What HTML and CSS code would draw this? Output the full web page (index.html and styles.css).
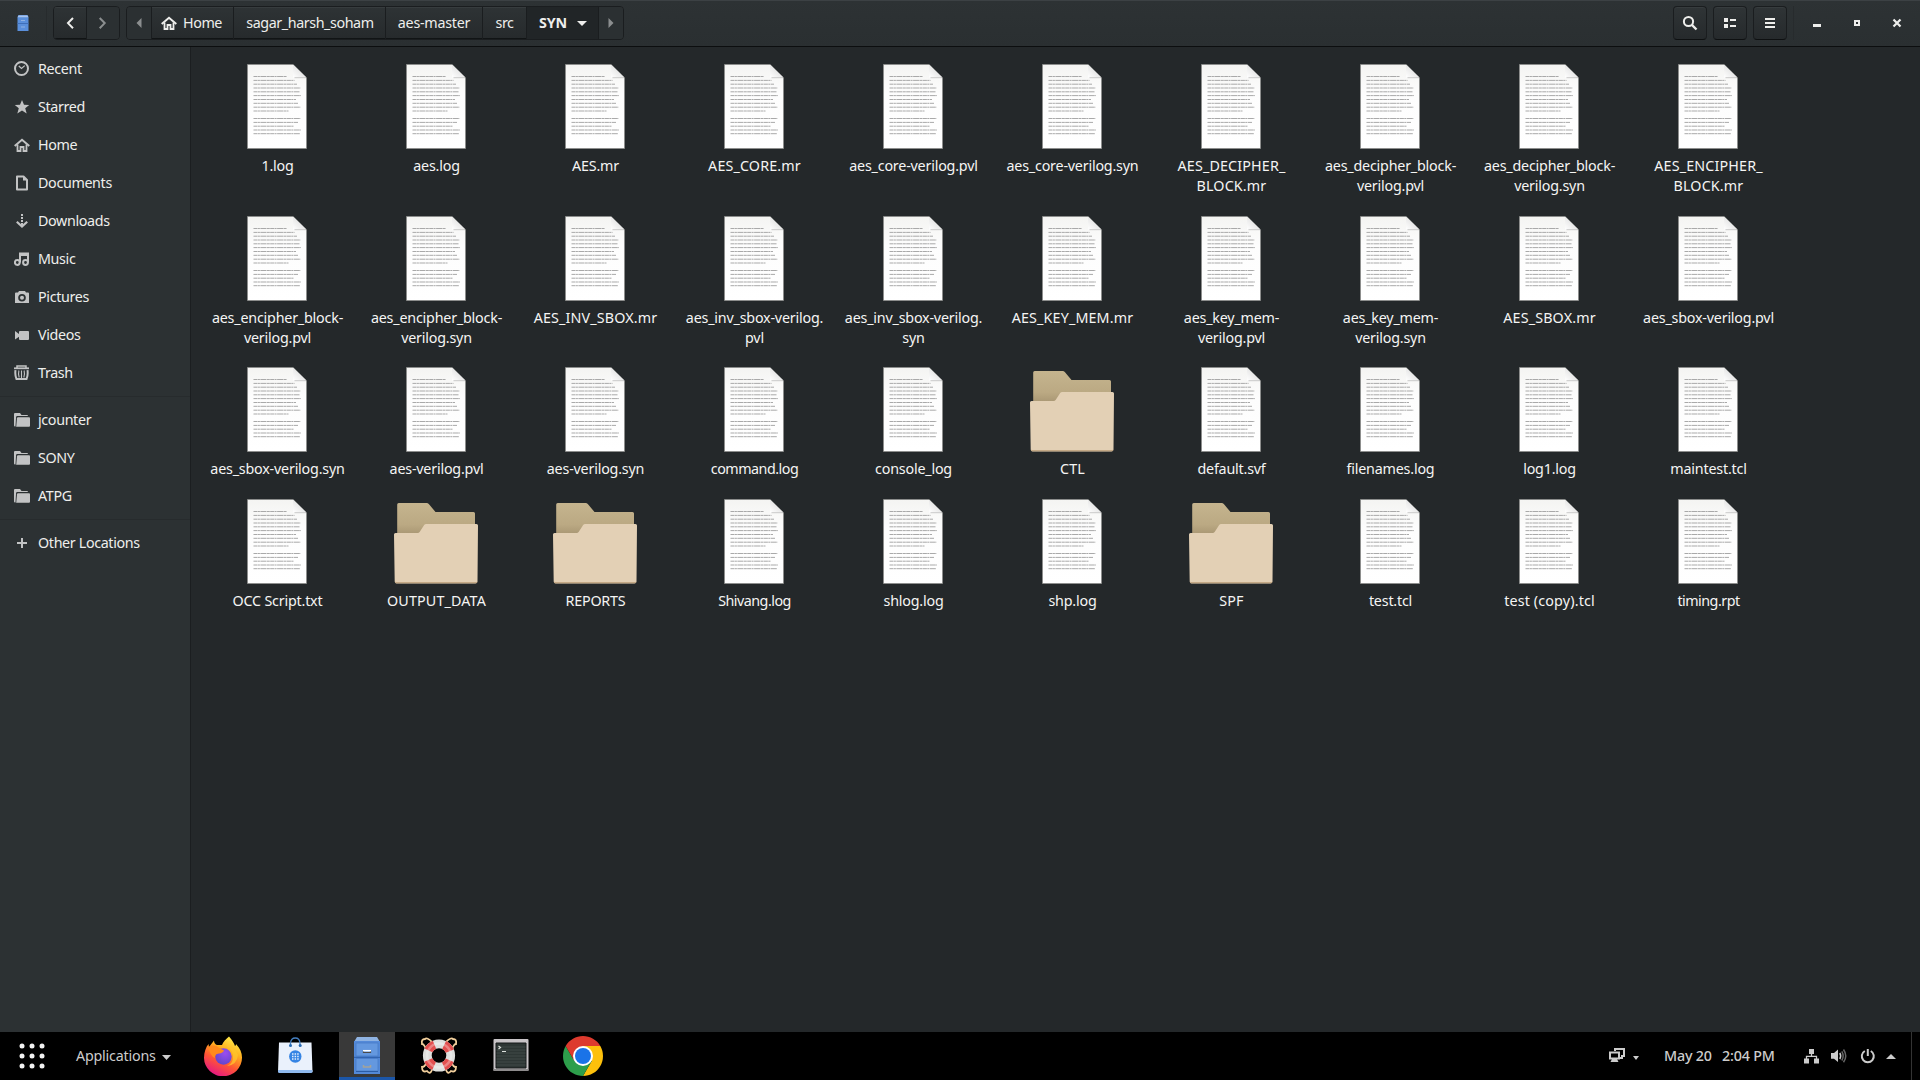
FILE: index.html
```html
<!DOCTYPE html>
<html lang="en">
<head>
<meta charset="utf-8">
<title>SYN</title>
<link rel="stylesheet" href="styles.css">
</head>
<body>
<svg class="defs" aria-hidden="true">
  <defs>
    <linearGradient id="paper" x1="0" y1="0" x2="0" y2="1"><stop offset="0" stop-color="#f4f4f2"/><stop offset=".35" stop-color="#fdfdfd"/><stop offset="1" stop-color="#fff"/></linearGradient>
    <linearGradient id="back" x1="0" y1="0" x2="0" y2="1"><stop offset="0" stop-color="#c5b48e"/><stop offset=".6" stop-color="#bba983"/><stop offset="1" stop-color="#a08e6c"/></linearGradient>
    <linearGradient id="fold" x1="0" y1="1" x2="1" y2="0"><stop offset="0" stop-color="#fff"/><stop offset=".5" stop-color="#e8e8e8"/></linearGradient>
    <symbol id="doc" viewBox="0 0 96 85">
      <path d="M18.5 .5H64L77.500 14V84.500H18.500Z" fill="url(#paper)" stroke="#8b8d8c" stroke-width=".8"/>
      <path d="M64 .5V13.500H77.500Z" fill="url(#fold)"/>
      <path d="M65.500 13.700H77" stroke="#c4c4c4" stroke-width=".9"/>
      <g stroke="#a9a9a9" stroke-width="1" stroke-dasharray="4 .4 2 .5 6 .4 3 .4">
        <path d="M24.500 12.500H58M24.500 16.400H65.500M24.500 20.200H68M24.500 24H71.500M24.500 27.800H70.500M24.500 31.600H72M24.500 35.500H67M24.500 39.300H69M24.500 43.200H71.500M24.500 47H59.500M24.500 54.500H71.500M24.500 58.400H69M24.500 62.200H65M24.500 66H72M24.500 69.700H71"/>
      </g>
    </symbol>
    <symbol id="dir" viewBox="0 0 96 85">
      <path d="M9.200 5.500Q9.200 4 10.700 4H38.500Q40 4 41 5.200L47.500 13H85.500Q87 13 87 14.500V40H9.200Z" fill="url(#back)"/>
      <path d="M6 35.500Q6 34 7.500 34H29.500Q31 34 31.800 32.800L36 26.200Q36.800 25 38.200 25H88.500Q90 25 90 26.500L89.500 82.500Q89.500 84.400 87.500 84.400H8.500Q6.700 84.400 6.700 82.500Z" fill="#e3d0b5"/>
      <path d="M6.800 82Q7 84.300 8.500 84.300H87.500Q89.300 84.300 89.400 82Q89 83.200 87.500 83.200H8.500Q7 83.200 6.800 82Z" fill="#b99b75"/>
    </symbol>
    <symbol id="home" viewBox="0 0 16 16"><g fill="none" stroke="currentColor"><path d="M.7 9 8 2.800 15.300 9" stroke-width="2"/><path d="M3.500 7.500V14H6.500V10H9.500V14H12.500V7.500" stroke-width="1.800"/></g></symbol>
    <symbol id="folder" viewBox="0 0 16 16"><path d="M0 2Q0 1 1 1H6L7.500 3H13Q14 3 14 4H3.200Q2.200 4 2.100 5L1.500 14.500H1Q0 14.500 0 13.500Z" fill="currentColor"/><path d="M4 5.200H15Q16 5.200 16 6.200V13.800Q16 14.800 15 14.800H2.200L3 6.200Q3.100 5.200 4 5.200Z" fill="currentColor"/></symbol>
  </defs>
</svg>

<header class="header">
  <svg class="app-icon" width="12" height="16" viewBox="0 0 12 16"><path d="M1.500 0H10.500L11.500 2V16H.5V2Z" fill="#5a8fdb"/><path d="M1.500 .5H10.500L11.300 2.200H.7Z" fill="#a9c4ec"/><path d="M.5 8.500H11.500" stroke="#3f6fb8"/><path d="M4 5.500H8M4 12H8" stroke="#8fb2e2"/></svg>
  <i class="vsep"></i>
  <nav class="group history">
    <span class="btn"><svg width="16" height="16" viewBox="0 0 16 16"><path d="M11 3 6 8.100 11 13.200" fill="none" stroke="#eeeeec" stroke-width="2"/></svg></span>
    <span class="btn off"><svg width="16" height="16" viewBox="0 0 16 16"><path d="M4.700 3 9.700 8.100 4.700 13.200" fill="none" stroke="#8b8e8f" stroke-width="2"/></svg></span>
  </nav>
  <nav class="group path">
    <span class="btn off edge"><svg width="16" height="16" viewBox="0 0 16 16"><path d="M10.500 3V13L5.500 8Z" fill="#8b8e8f"/></svg></span>
    <span class="btn p-home"><svg width="16" height="16"><use href="#home"/></svg>Home</span>
    <span class="btn p-user">sagar_harsh_soham</span>
    <span class="btn p-aes">aes-master</span>
    <span class="btn p-src">src</span>
    <span class="btn p-syn">SYN<svg width="10" height="5" viewBox="0 0 10 5"><path d="M0 0H10L5 5Z" fill="#eeeeec"/></svg></span>
    <span class="btn off edge"><svg width="16" height="16" viewBox="0 0 16 16"><path d="M5.500 3V13L10.500 8Z" fill="#8b8e8f"/></svg></span>
  </nav>
  <div class="tools">
    <span class="tool"><svg width="16" height="16" viewBox="0 0 16 16"><circle cx="6.500" cy="6.500" r="4.600" fill="none" stroke="#eeeeec" stroke-width="2"/><path d="M9.900 9.900 14.500 14.500" stroke="#eeeeec" stroke-width="2.300"/></svg></span>
    <span class="tool"><svg width="16" height="16" viewBox="0 0 16 16"><path d="M2 3H6V7H2ZM2 9H6V13H2ZM8 4H14V6H8ZM8 10H14V12H8Z" fill="#eeeeec"/></svg></span>
    <span class="tool"><svg width="16" height="16" viewBox="0 0 16 16"><path d="M3 3H13V5H3ZM3 7H13V9H3ZM3 11H13V13H3Z" fill="#eeeeec"/></svg></span>
  </div>
  <i class="vsep right"></i>
  <div class="controls">
    <svg width="16" height="16" viewBox="0 0 16 16"><path d="M4 9H12V12H4Z" fill="#eeeeec"/></svg>
    <svg width="16" height="16" viewBox="0 0 16 16"><path d="M6 6H10V10H6Z" fill="none" stroke="#eeeeec" stroke-width="2"/></svg>
    <svg width="16" height="16" viewBox="0 0 16 16"><path d="M4.500 4.500 11.500 11.500M11.500 4.500 4.500 11.500" stroke="#eeeeec" stroke-width="2.200"/></svg>
  </div>
</header>

<main class="window">
  <aside class="sidebar">
    <div class="place"><svg width="16" height="16" viewBox="0 0 16 16"><circle cx="7.500" cy="7.500" r="6.500" fill="none" stroke="currentColor" stroke-width="2"/><path d="M4.800 5 7.500 7.500 10.800 4.600" fill="none" stroke="currentColor" stroke-width="1.200"/></svg>Recent</div>
    <div class="place"><svg width="16" height="16" viewBox="0 0 16 16"><path d="M8 1 10 5.800 15.200 6 11.200 9.300 12.700 14.500 8 11.600 3.300 14.500 4.800 9.300 .8 6 6 5.800Z" fill="currentColor"/></svg>Starred</div>
    <div class="place"><svg width="16" height="16"><use href="#home"/></svg>Home</div>
    <div class="place"><svg width="16" height="16" viewBox="0 0 16 16"><path d="M3 1.500H9.500L13 5V14.500H3Z" fill="none" stroke="currentColor" stroke-width="2" stroke-linejoin="round"/><path d="M9 1V5.500H13.500Z" fill="currentColor"/></svg>Documents</div>
    <div class="place"><svg width="16" height="16" viewBox="0 0 16 16"><path d="M7 1H9V3H7ZM7 4H9V6H7ZM7 7H9V9H7ZM7 10H9V13H7Z" fill="currentColor"/><path d="M2.800 8.800 8 13.600 13.200 8.800" fill="none" stroke="currentColor" stroke-width="2.200"/></svg>Downloads</div>
    <div class="place"><svg width="16" height="16" viewBox="0 0 16 16"><g fill="none" stroke="currentColor" stroke-width="2"><circle cx="3.300" cy="11.500" r="2.400"/><circle cx="11.500" cy="11.500" r="2.400"/><path d="M6 11.500V2.500H14V11.500"/></g><path d="M6 2H14V5H6Z" fill="currentColor"/></svg>Music</div>
    <div class="place"><svg width="16" height="16" viewBox="0 0 16 16"><path fill-rule="evenodd" d="M1 4.500Q1 3.500 2 3.500H4L5 2H11L12 3.500H14Q15 3.500 15 4.500V14H1ZM8 5A3.800 3.800 0 1 0 8 12.600 3.800 3.800 0 1 0 8 5ZM8 6.800A2 2 0 1 1 8 10.800 2 2 0 1 1 8 6.800Z" fill="currentColor"/></svg>Pictures</div>
    <div class="place"><svg width="16" height="16" viewBox="0 0 16 16"><path d="M1 4 5 7V5Q5 4 6 4H14Q15 4 15 5V12Q15 13 14 13H6Q5 13 5 12V9.800L1 12.500Z" fill="currentColor"/></svg>Videos</div>
    <div class="place"><svg width="16" height="16" viewBox="0 0 16 16"><g fill="none" stroke="currentColor"><path d="M0 3.300H15" stroke-width="1.800"/><path d="M3 3V.9H12V3" stroke-width="1.500"/><path d="M1.500 5.200Q.8 10 2.500 14H12.500Q14.200 10 13.500 5.200" stroke-width="2"/><path d="M4.900 5.500Q4 9 5.200 12.500M7.500 5.500V13M10.100 5.500Q11 9 9.800 12.500" stroke-width="1.100"/></g></svg>Trash</div>
    <hr>
    <div class="place"><svg width="16" height="16"><use href="#folder"/></svg>jcounter</div>
    <div class="place"><svg width="16" height="16"><use href="#folder"/></svg>SONY</div>
    <div class="place"><svg width="16" height="16"><use href="#folder"/></svg>ATPG</div>
    <hr>
    <div class="place"><svg width="16" height="16" viewBox="0 0 16 16"><path d="M8 3V13M3 8H13" stroke="currentColor" stroke-width="2"/></svg>Other Locations</div>
  </aside>

  <section class="files">
    <figure><svg><use href="#doc"/></svg><figcaption>1.log</figcaption></figure>
    <figure><svg><use href="#doc"/></svg><figcaption>aes.log</figcaption></figure>
    <figure><svg><use href="#doc"/></svg><figcaption>AES.mr</figcaption></figure>
    <figure><svg><use href="#doc"/></svg><figcaption class="caps">AES_CORE.mr</figcaption></figure>
    <figure><svg><use href="#doc"/></svg><figcaption>aes_core-verilog.pvl</figcaption></figure>
    <figure><svg><use href="#doc"/></svg><figcaption>aes_core-verilog.syn</figcaption></figure>
    <figure><svg><use href="#doc"/></svg><figcaption class="caps">AES_DECIPHER_<br>BLOCK.mr</figcaption></figure>
    <figure><svg><use href="#doc"/></svg><figcaption>aes_decipher_block-<br>verilog.pvl</figcaption></figure>
    <figure><svg><use href="#doc"/></svg><figcaption>aes_decipher_block-<br>verilog.syn</figcaption></figure>
    <figure><svg><use href="#doc"/></svg><figcaption class="caps">AES_ENCIPHER_<br>BLOCK.mr</figcaption></figure>

    <figure><svg><use href="#doc"/></svg><figcaption>aes_encipher_block-<br>verilog.pvl</figcaption></figure>
    <figure><svg><use href="#doc"/></svg><figcaption>aes_encipher_block-<br>verilog.syn</figcaption></figure>
    <figure><svg><use href="#doc"/></svg><figcaption class="caps">AES_INV_SBOX.mr</figcaption></figure>
    <figure><svg><use href="#doc"/></svg><figcaption>aes_inv_sbox-verilog.<br>pvl</figcaption></figure>
    <figure><svg><use href="#doc"/></svg><figcaption>aes_inv_sbox-verilog.<br>syn</figcaption></figure>
    <figure><svg><use href="#doc"/></svg><figcaption class="caps">AES_KEY_MEM.mr</figcaption></figure>
    <figure><svg><use href="#doc"/></svg><figcaption>aes_key_mem-<br>verilog.pvl</figcaption></figure>
    <figure><svg><use href="#doc"/></svg><figcaption>aes_key_mem-<br>verilog.syn</figcaption></figure>
    <figure><svg><use href="#doc"/></svg><figcaption class="caps">AES_SBOX.mr</figcaption></figure>
    <figure><svg><use href="#doc"/></svg><figcaption>aes_sbox-verilog.pvl</figcaption></figure>

    <figure><svg><use href="#doc"/></svg><figcaption>aes_sbox-verilog.syn</figcaption></figure>
    <figure><svg><use href="#doc"/></svg><figcaption>aes-verilog.pvl</figcaption></figure>
    <figure><svg><use href="#doc"/></svg><figcaption>aes-verilog.syn</figcaption></figure>
    <figure><svg><use href="#doc"/></svg><figcaption class="tight">command.log</figcaption></figure>
    <figure><svg><use href="#doc"/></svg><figcaption>console_log</figcaption></figure>
    <figure><svg><use href="#dir"/></svg><figcaption class="caps">CTL</figcaption></figure>
    <figure><svg><use href="#doc"/></svg><figcaption>default.svf</figcaption></figure>
    <figure><svg><use href="#doc"/></svg><figcaption>filenames.log</figcaption></figure>
    <figure><svg><use href="#doc"/></svg><figcaption>log1.log</figcaption></figure>
    <figure><svg><use href="#doc"/></svg><figcaption>maintest.tcl</figcaption></figure>

    <figure><svg><use href="#doc"/></svg><figcaption>OCC Script.txt</figcaption></figure>
    <figure><svg><use href="#dir"/></svg><figcaption class="caps">OUTPUT_DATA</figcaption></figure>
    <figure><svg><use href="#dir"/></svg><figcaption>REPORTS</figcaption></figure>
    <figure><svg><use href="#doc"/></svg><figcaption class="tight">Shivang.log</figcaption></figure>
    <figure><svg><use href="#doc"/></svg><figcaption>shlog.log</figcaption></figure>
    <figure><svg><use href="#doc"/></svg><figcaption>shp.log</figcaption></figure>
    <figure><svg><use href="#dir"/></svg><figcaption class="caps">SPF</figcaption></figure>
    <figure><svg><use href="#doc"/></svg><figcaption>test.tcl</figcaption></figure>
    <figure><svg><use href="#doc"/></svg><figcaption class="caps">test (copy).tcl</figcaption></figure>
    <figure><svg><use href="#doc"/></svg><figcaption class="tight">timing.rpt</figcaption></figure>
  </section>
</main>

<footer class="taskbar">
  <svg class="apps" width="26" height="26" viewBox="0 0 26 26"><g fill="#f2f2f2"><circle cx="3" cy="3" r="2.500"/><circle cx="13" cy="3" r="2.500"/><circle cx="23" cy="3" r="2.500"/><circle cx="3" cy="13" r="2.500"/><circle cx="13" cy="13" r="2.500"/><circle cx="23" cy="13" r="2.500"/><circle cx="3" cy="23" r="2.500"/><circle cx="13" cy="23" r="2.500"/><circle cx="23" cy="23" r="2.500"/></g></svg>
  <span class="menu">Applications</span>
  <svg class="menu-arrow" width="9" height="5" viewBox="0 0 9 5"><path d="M0 0H9L4.500 5Z" fill="#ccc"/></svg>
  <div class="dock">
    <span class="task"><svg width="40" height="40" viewBox="0 0 40 40">
      <defs><linearGradient id="fx" x1=".8" y1="0" x2=".3" y2="1"><stop offset="0" stop-color="#fff44f"/><stop offset=".35" stop-color="#ffb01f"/><stop offset=".65" stop-color="#ff5634"/><stop offset="1" stop-color="#e31587"/></linearGradient><radialGradient id="fp" cx=".6" cy=".3" r=".8"><stop offset="0" stop-color="#9b4df0"/><stop offset="1" stop-color="#5a45c8"/></radialGradient></defs>
      <path d="M26 .5C29 4 31 7 32 10 33 9.500 33 8.500 33 8 37 12 39 17 39 21.500A19 18.500 0 0 1 1 22C1 16 3 11 5.500 8L6 11 11 4.500C11 7 12.500 8.500 14 9L19 9C20 6 23 3 26 .5Z" fill="url(#fx)"/>
      <circle cx="20.500" cy="20.500" r="8.200" fill="url(#fp)"/>
      <path d="M5.500 11Q12 8 15.500 11.500L21 14.500Q20 17 16 17.500 11 18 12 22 7 20 5.500 11Z" fill="#ff8a1c"/>
      <path d="M20 9Q28 10 30 19 31 27 24 30 34 29 35 19 31 9 20 9Z" fill="#ffc52c" opacity=".75"/></svg></span>
    <span class="task"><svg width="40" height="40" viewBox="0 0 40 40"><path d="M4 6.500H36.500L37.500 36H3Z" fill="#eaf1fc"/><path d="M3 34H37.500V36Q37.500 37 36 37H4.500Q3 37 3 36Z" fill="#8fb9ee"/><path d="M15.500 10V7Q16 2 20.300 2T25 7V10" fill="none" stroke="#4580c2" stroke-width="1.300"/><circle cx="15.500" cy="9.500" r="1.500" fill="#2669b4"/><circle cx="25.200" cy="9.500" r="1.500" fill="#2669b4"/><circle cx="20.300" cy="20.500" r="6.200" fill="#3584e4"/><path d="M17 18H24M17 20.500H24M17 23H24" stroke="#e3eefc" stroke-width="1.300" stroke-dasharray="1.500 1.100"/></svg></span>
    <span class="task active"><svg width="40" height="40" viewBox="0 0 40 40"><path d="M10 1H30L33 6H7Z" fill="#8fb3e2"/><path d="M7 5H33V38H7Z" fill="#5389d8"/><path d="M9 7H31V20H9ZM9 22.500H31V35H9Z" fill="#6498df" stroke="#477bc8" stroke-width=".8"/><path d="M7 21.300H33M9 35.500H31" stroke="#2a5ca6"/><path d="M16.500 14.500V16.500H23.500V14.500" fill="none" stroke="#4a4a4a" stroke-width="1.200"/><path d="M16 14.700H24" stroke="#fff" stroke-width="1.500"/><path d="M16.500 29V31H23.500V29" fill="none" stroke="#a5a399" stroke-width="1.500"/></svg></span>
    <span class="task"><svg width="40" height="40" viewBox="0 0 40 40"><path d="M13 6Q8 1 6 3 2 3 3 8 5 8 7 13M27 6Q32 1 34 3 38 3 37 8 35 8 33 13M13 34Q11 39 8 35 3 37 3 31 6 31 7 27M27 34Q29 39 32 35 37 37 37 31 34 31 33 27" fill="none" stroke="#f2cf9c" stroke-width="1.800"/><circle cx="20" cy="19.500" r="11.700" fill="none" stroke="#dfe0de" stroke-width="8.800"/><circle cx="20" cy="19.500" r="11.700" fill="none" stroke="#e34f4f" stroke-width="8.800" stroke-dasharray="8.500 9.880" stroke-dashoffset="-4.940"/><circle cx="20" cy="19.500" r="12" fill="none" stroke="#fff" stroke-width="2.500" opacity=".3"/></svg></span>
    <span class="task"><svg width="40" height="40" viewBox="0 0 40 40"><path d="M2.500 4Q2.500 3 3.500 3H36.500Q37.500 3 37.500 4V34.500H2.500Z" fill="#c8c4c7"/><path d="M2.500 33H37.500V35H2.500Z" fill="#8d8b8c"/><path d="M5 7H35V32H5Z" fill="#2e3735" stroke="#171b1a" stroke-width="1"/><path d="M5.500 11H34.500M5.500 14H34.500M5.500 17H34.500M5.500 20H34.500M5.500 23H34.500M5.500 26H34.500M5.500 29H34.500" stroke="#414a48"/><path d="M7.500 10 9.500 11.500 7.500 13M11 15.500H15" fill="none" stroke="#dfe3df" stroke-width="1.200"/></svg></span>
    <span class="task"><svg width="40" height="40" viewBox="0 0 40 40"><path d="M20 10H37.320A20 20 0 0 1 20 40L28.660 25Z" fill="#fdc00c"/><path d="M28.660 25 20 40A20 20 0 0 1 2.680 10L11.340 25Z" fill="#2d9e4b"/><path d="M20 10H37.320A20 20 0 0 0 2.680 10L11.340 25Z" fill="#dd3a2e"/><circle cx="20" cy="20" r="10" fill="#fff"/><circle cx="20" cy="20" r="8" fill="#1a73e8"/></svg></span>
  </div>
  <div class="status">
    <svg class="s-disp" width="16" height="16" viewBox="0 0 16 16"><path d="M6 3V1H15V8H12" fill="none" stroke="#ccc" stroke-width="2"/><path d="M1 4.500H10V10.500H1Z" fill="none" stroke="#ccc" stroke-width="2"/><path d="M3 11H8L9.500 14H1.500ZM11 9H14V11H11Z" fill="#ccc"/></svg>
    <svg class="s-down" width="6" height="4" viewBox="0 0 6 4"><path d="M0 0H6L3 4Z" fill="#ccc"/></svg>
    <span class="date">May 20</span>
    <span class="time">2:04 PM</span>
    <svg class="s-net" width="16" height="16" viewBox="0 0 16 16"><path d="M5 1H10V6H5ZM0 10.500H5V15.500H0ZM10 10.500H15V15.500H10Z" fill="#ccc"/><path d="M7.500 5V8.300M2.500 11V8.300H12.500V11" fill="none" stroke="#ccc" stroke-width="1.300"/></svg>
    <svg class="s-vol" width="16" height="16" viewBox="0 0 16 16"><path d="M0 5H3L7 1.500V14L3 10.700H0Z" fill="#ccc"/><path d="M8.800 5Q10.600 8 8.800 11" fill="none" stroke="#ccc" stroke-width="1.500"/><path d="M10.800 3.300Q13.500 8 10.800 12.500M12.500 1.500Q17 8 12.500 14.300" fill="none" stroke="#666" stroke-width="1.500"/></svg>
    <svg class="s-pow" width="16" height="16" viewBox="0 0 16 16"><path d="M4.800 3A6 6 0 1 0 10.800 3M7.800 1V8" fill="none" stroke="#ccc" stroke-width="2"/></svg>
    <svg class="s-up" width="10" height="5" viewBox="0 0 10 5"><path d="M0 5H10L5 0Z" fill="#ccc"/></svg>
    <i class="edge-line"></i>
  </div>
</footer>
</body>
</html>
```
FILE: styles.css
```css
* { box-sizing: border-box; }
body {
  margin: 0;
  width: 1920px;
  height: 1080px;
  display: flex;
  flex-direction: column;
  overflow: hidden;
  background: #24282a;
  color: #eeeeec;
  font: 14.3px/20px "Noto Sans", "Open Sans", sans-serif;
  letter-spacing: -0.2px;
}
svg { display: block; flex: none; }
.defs { position: absolute; width: 0; height: 0; }

.header {
  display: flex;
  align-items: flex-start;
  height: 47px;
  padding-top: 5px;
  background: linear-gradient(#2d3234, #2a2f31);
  border-top: 1px solid #3c4144;
  border-bottom: 1px solid #0c0e0f;
}
.app-icon { margin: 9px 0 0 17px; }
.vsep { width: 1px; height: 34px; margin-left: 17px; background: #272b2d; }
.group {
  display: flex;
  height: 34px;
  border: 1px solid #1a1d1f;
  border-radius: 4px;
  overflow: hidden;
}
.history { margin-left: 6px; width: 67px; }
.path { margin-left: 6px; letter-spacing: -0.42px; }
.btn {
  display: flex;
  align-items: center;
  justify-content: center;
  background: linear-gradient(#2e3335, #262a2c);
  box-shadow: inset 0 1px #373c3e, inset 0 -1px #111415;
  border-right: 1px solid #1a1d1f;
}
.btn:last-child { border-right: 0; }
.off { background: #2b3032; box-shadow: none; }
.history .btn { width: 33px; }
.path .edge { width: 25px; }
.path .edge:last-child { width: 24px; }
.p-home { width: 82px; gap: 6px; padding-right: 2px; }
.p-user { width: 152px; padding-left: 1px; }
.p-aes { width: 97px; letter-spacing: -0.25px; }
.p-src { width: 44px; }
.path .p-syn { width: 72px; gap: 10px; padding-left: 1px; letter-spacing: -0.2px; font-weight: 700; background: #212527; box-shadow: none; }
.tools { display: flex; gap: 6px; margin-left: auto; }
.tool {
  width: 34px;
  height: 34px;
  display: grid;
  place-items: center;
  border: 1px solid #1a1d1f;
  border-bottom-color: #0e1011;
  border-radius: 4px;
  background: linear-gradient(#2f3436, #262a2c);
  box-shadow: inset 0 1px #373c3e;
}
.vsep.right { margin-left: 6px; }
.controls { display: flex; gap: 24px; margin: 9px 15px 0 15px; }

.window { display: flex; height: 985px; }
.sidebar {
  width: 191px;
  padding-top: 3px;
  background: #2c3133;
  border-right: 1px solid #1b1e20;
  letter-spacing: -0.35px;
}
.place { display: flex; align-items: center; gap: 8px; height: 38px; padding-left: 14px; }
.place svg { color: #c2c3c4; }
.sidebar hr { height: 1px; margin: 4px 0; border: 0; background: #272b2d; }

.files {
  display: grid;
  grid-template-columns: repeat(10, 159px);
  grid-template-rows: 152px 151px 132px 132px;
  align-content: start;
  padding: 17px 0 0 6px;
}
figure { margin: 0; display: flex; flex-direction: column; align-items: center; }
figure svg { width: 96px; height: 85px; }
figcaption { margin-top: 7px; padding-left: 2px; text-align: center; white-space: nowrap; color: #f5f5f4; }
.caps { letter-spacing: 0.15px; }
.tight { letter-spacing: -0.5px; }

.taskbar { display: flex; align-items: center; height: 48px; background: #000; color: #ccc; }
.apps { margin-left: 19px; }
.menu { width: 81px; margin-left: 31px; }
.menu-arrow { margin: 2px 0 0 5px; }
.dock { display: flex; gap: 16px; margin-left: 24px; height: 48px; }
.task { width: 56px; padding-top: 4px; display: flex; justify-content: center; }
.active { background: #393939; border-bottom: 3px solid #1b56a8; }
.status { display: flex; align-items: center; height: 48px; margin-left: auto; font-weight: 500; }
.s-down { margin: 3px 0 0 8px; }
.date { width: 58px; margin-left: 25px; }
.time { width: 54px; }
.s-net { margin-left: 28px; }
.s-vol { margin-left: 11px; }
.s-pow { margin-left: 13px; }
.s-up { margin-left: 10px; }
.edge-line { width: 1px; height: 48px; margin: 0 8px 0 15px; background: #333; }
```
